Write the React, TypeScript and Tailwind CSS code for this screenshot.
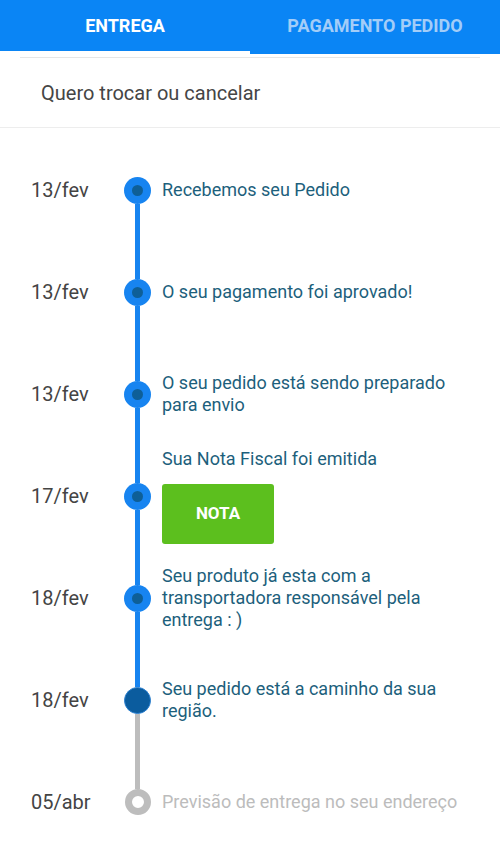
const steps = [
  { date: "13/fev", text: "Recebemos seu Pedido", state: "done" },
  { date: "13/fev", text: "O seu pagamento foi aprovado!", state: "done" },
  { date: "13/fev", text: "O seu pedido está sendo preparado para envio", state: "done" },
  { date: "17/fev", text: "Sua Nota Fiscal foi emitida", state: "done", button: true },
  { date: "18/fev", text: "Seu produto já esta com a transportadora responsável pela entrega : )", state: "done" },
  { date: "18/fev", text: "Seu pedido está a caminho da sua região.", state: "current" },
  { date: "05/abr", text: "Previsão de entrega no seu endereço", state: "pending" },
];

function Dot({ state }: { state: string }) {
  if (state === "pending") {
    return <div className="h-[26px] w-[26px] shrink-0 rounded-full border-[7px] border-[#bdbdbd] bg-white" />;
  }
  if (state === "current") {
    return <div className="h-[27px] w-[27px] shrink-0 rounded-full border border-[#2a7fd0] bg-[#0b5c9e]" />;
  }
  return (
    <div className="flex h-[27px] w-[27px] shrink-0 items-center justify-center rounded-full bg-[#1784f0]">
      <div className="h-[11px] w-[11px] rounded-full bg-[#0e5f97]" />
    </div>
  );
}

export default function App() {
  return (
    <div className="min-h-[861px] w-[500px] bg-white font-['Roboto',sans-serif]">
      {/* Abas */}
      <header className="flex h-[54px] bg-[#0a85f5]">
        <div className="relative flex flex-1 items-center justify-center pb-1 text-[18px] font-bold text-white">
          ENTREGA
          <span className="absolute inset-x-0 bottom-0 h-[3px] bg-white" />
        </div>
        <div className="flex flex-1 items-center justify-center pb-1 text-[18px] font-bold text-[#a3cdf8]">
          PAGAMENTO PEDIDO
        </div>
      </header>

      <div className="mx-5 h-[4px] border-b border-[#e6e6e6]" />

      <div className="flex h-[70px] items-center border-b border-[#ededed] pl-[41px] text-[20px] text-[#454545]">
        Quero trocar ou cancelar
      </div>

      {/* Linha do tempo */}
      <div className="pt-[11px]">
        {steps.map((s, i) => {
          const topColor =
            i === 0 ? "bg-transparent" : s.state === "pending" ? "bg-[#bdbdbd]" : "bg-[#1784f0]";
          const bottomColor =
            i === steps.length - 1
              ? "bg-transparent"
              : steps[i + 1].state === "pending"
              ? "bg-[#bdbdbd]"
              : "bg-[#1784f0]";
          return (
            <div key={i} className="flex h-[102px] items-stretch">
              <div className="flex w-[124px] items-center pl-[31px] text-[20px] text-[#444444]">
                {s.date}
              </div>
              <div className="flex w-[27px] flex-col items-center">
                <div className={`w-[5px] flex-1 ${topColor}`} />
                <Dot state={s.state} />
                <div className={`w-[5px] flex-1 ${bottomColor}`} />
              </div>
              <div className="flex flex-1 flex-col justify-center pl-[11px] pr-[28px]">
                <p
                  className={`text-[18px] leading-[22px] ${
                    s.state === "pending" ? "text-[#bcbcbc]" : "text-[#1d5f7c]"
                  }`}
                >
                  {s.text}
                </p>
                {s.button && (
                  <button className="mt-[14px] flex h-[60px] w-[112px] items-center justify-center rounded-[3px] bg-[#5cbf1e] text-[17px] font-bold text-white">
                    NOTA
                  </button>
                )}
              </div>
            </div>
          );
        })}
      </div>
    </div>
  );
}
